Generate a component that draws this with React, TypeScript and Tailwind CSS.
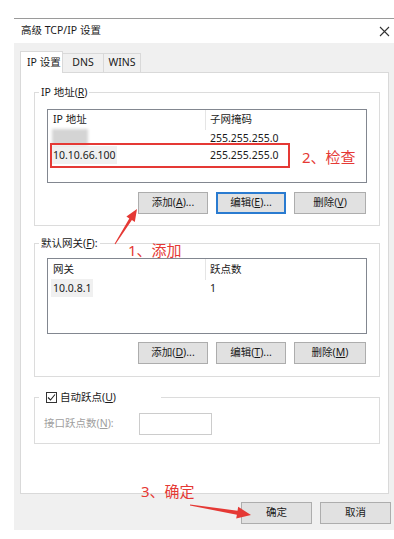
import React from 'react'

const font = "font-['Noto_Sans','Noto_Sans_CJK_SC',sans-serif]"

function Btn({ children, w, focus }: { children: React.ReactNode; w: string; focus?: boolean }) {
  return (
    <div className={`${w} h-[22px] flex items-center justify-center bg-[#e1e1e1] text-[10.5px] text-[#1a1a1a] ${focus ? 'border-2 border-[#2a7bd0]' : 'border border-[#adadad]'}`}>
      {children}
    </div>
  )
}

function Group({ label, children, h, labelW }: { label: React.ReactNode; children: React.ReactNode; h: string; labelW?: string }) {
  return (
    <div className={`relative w-[346px] ${h} border border-[#dcdcdc]`}>
      <div className={`absolute -top-[8px] left-[4px] h-[15px] flex items-center bg-white px-[2px] ${labelW ?? ''}`}>{label}</div>
      {children}
    </div>
  )
}

export default function App(){
  return (
    <div className={`relative w-[394px] h-[539px] bg-white overflow-hidden text-[#1a1a1a] ${font}`}>
      <div className="ml-[14px] mt-[18px] w-[380px] border-t border-[#9a9a9a]">
        {/* title bar */}
        <div className="h-[24px] flex items-center justify-between pl-[7px] pr-[4px] bg-white">
          <span className="text-[10.5px]">高级 TCP/IP 设置</span>
          <svg width="11" height="11" viewBox="0 0 11 11" className="mt-[1px]">
            <path d="M1 1 L10 10 M10 1 L1 10" stroke="#333" strokeWidth="1.1" />
          </svg>
        </div>
        {/* body */}
        <div className="bg-[#f0f0f0] pl-[6px] pt-[8px] pb-[6px] h-[487px]">
          <div className="flex items-end h-[21px]">
            <div className="relative z-10 -mb-px w-[43px] h-[22px] bg-white border border-b-0 border-[#d9d9d9] flex items-center pl-[6px] text-[10.5px]">IP 设置</div>
            <div className="w-[41px] h-[19px] border-t border-r border-[#d9d9d9] flex items-center justify-center text-[10.5px]">DNS</div>
            <div className="w-[37px] h-[19px] border-t border-r border-[#d9d9d9] flex items-center justify-center text-[10.5px]">WINS</div>
          </div>
          <div className="w-[369px] h-[422px] bg-white border border-[#d9d9d9] pl-[13px] pt-[19px]">
            {/* IP group */}
            <Group h="h-[134px]" label={<span className="text-[10.5px]">IP 地址(<u>R</u>)</span>}>
              <div className="ml-[12px] mt-[16px] w-[320px] h-[74px] border border-[#828790] text-[10.5px]">
                <div className="flex h-[20px] items-center">
                  <div className="w-[158px] pl-[5px] h-full flex items-center border-r border-[#e5e5e5]">IP 地址</div>
                  <div className="pl-[4px]">子网掩码</div>
                </div>
                <div className="flex h-[17px] items-center">
                  <div className="w-[158px] pl-[4px]">
                    <div className="-mt-[3px] w-[36px] h-[16px] bg-[#d4d4d4] blur-[1.5px]" />
                  </div>
                  <div className="pl-[4px]">255.255.255.0</div>
                </div>
                <div className="flex h-[17px] items-center">
                  <div className="w-[158px] pl-[4px]"><span className="bg-[#f0f0f0] px-[1px] py-[2px]">10.10.66.100</span></div>
                  <div className="pl-[4px]">255.255.255.0</div>
                </div>
              </div>
              <div className="mt-[9px] ml-[103px] flex gap-[8px]">
                <Btn w="w-[70px]">添加(<u>A</u>)...</Btn>
                <Btn w="w-[70px]" focus>编辑(<u>E</u>)...</Btn>
                <Btn w="w-[72px]">删除(<u>V</u>)</Btn>
              </div>
            </Group>
            <div className="h-[17px]" />
            {/* Gateway group */}
            <Group h="h-[134px]" label={<span className="text-[10.5px]">默认网关(<u>F</u>):</span>}>
              <div className="ml-[12px] mt-[14px] w-[320px] h-[76px] border border-[#828790] text-[10.5px]">
                <div className="flex h-[21px] items-center">
                  <div className="w-[158px] pl-[5px] h-full flex items-center border-r border-[#e5e5e5]">网关</div>
                  <div className="pl-[4px]">跃点数</div>
                </div>
                <div className="flex h-[17px] items-center">
                  <div className="w-[158px] pl-[3px]"><span className="bg-[#f0f0f0] px-[2px] py-[2px]">10.0.8.1</span></div>
                  <div className="pl-[4px]">1</div>
                </div>
              </div>
              <div className="mt-[8px] ml-[103px] flex gap-[8px]">
                <Btn w="w-[70px]">添加(<u>D</u>)...</Btn>
                <Btn w="w-[70px]">编辑(<u>T</u>)...</Btn>
                <Btn w="w-[72px]">删除(<u>M</u>)</Btn>
              </div>
            </Group>
            <div className="h-[20px]" />
            {/* Auto metric */}
            <Group h="h-[47px]" labelW="w-[122px] -left-[1px]" label={
              <div className="flex items-center gap-[3px] pl-[5px] text-[10.5px]">
                <div className="w-[11px] h-[11px] border border-[#333] flex items-center justify-center">
                  <svg width="9" height="9" viewBox="0 0 9 9"><path d="M1 4.5 L3.5 7 L8 1.5" stroke="#222" strokeWidth="1.1" fill="none" /></svg>
                </div>
                <span>自动跃点(<u>U</u>)</span>
              </div>
            }>
              <div className="flex items-center mt-[15px] pl-[9px]">
                <span className="w-[95px] text-[10.5px] text-[#a0a0a0]">接口跃点数(<u>N</u>):</span>
                <div className="w-[73px] h-[22px] border border-[#cccccc] bg-white" />
              </div>
            </Group>
          </div>
          <div className="mt-[8px] flex justify-end gap-[8px] pr-[3px]">
            <Btn w="w-[71px]">确定</Btn>
            <Btn w="w-[71px]">取消</Btn>
          </div>
        </div>
      </div>

      {/* annotations */}
      <div className="absolute left-[50px] top-[143px] w-[240px] h-[25px] border-2 border-[#e53935]" />
      <div className="absolute left-[302px] top-[147px] text-[15px] leading-[20px] text-[#e53935]">2、检查</div>
      <div className="absolute left-[128px] top-[240px] text-[15px] leading-[20px] text-[#e53935]">1、添加</div>
      <div className="absolute left-[141px] top-[481px] text-[15px] leading-[20px] text-[#e53935]">3、确定</div>
      <svg className="absolute inset-0 pointer-events-none" width="394" height="539">
        <polygon fill="#e53935" points="137,209 134.8,221.9 131.9,220.0 115.4,244.3 114.6,243.7 129.3,218.4 126.4,216.5" />
        <polygon fill="#e53935" points="251,515 236.2,518.6 236.9,514.7 189.9,505.5 190.1,504.5 237.5,510.7 238.2,506.8" />
      </svg>
    </div>
  )
}
